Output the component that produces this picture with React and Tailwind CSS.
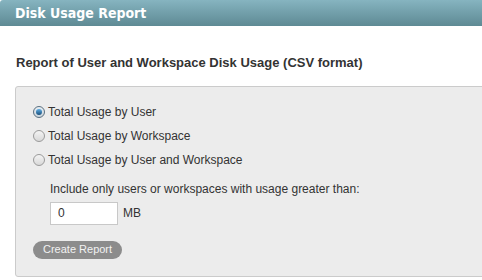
import React, { useState } from "react";

function Radio({ checked, label, onClick }) {
  return (
    <label className="flex items-center h-[24px] cursor-pointer" onClick={onClick}>
      <span
        className={`w-[12px] h-[12px] rounded-full border flex items-center justify-center ${
          checked
            ? "border-[#5a6f80] bg-gradient-to-b from-[#e8eef3] to-[#c9d4dc]"
            : "border-[#9a9a9a] bg-gradient-to-b from-[#f4f4f4] to-[#d8d8d8]"
        }`}
      >
        {checked && (
          <span className="w-[6px] h-[6px] rounded-full bg-gradient-to-b from-[#5fb0e8] to-[#1a4f7a]" />
        )}
      </span>
      <span className="ml-[3px] text-[12px] text-[#333]">{label}</span>
    </label>
  );
}

export default function App() {
  const [mode, setMode] = useState(0);
  const options = [
    "Total Usage by User",
    "Total Usage by Workspace",
    "Total Usage by User and Workspace",
  ];

  return (
    <div className="w-[482px] h-[280px] bg-white overflow-hidden font-['Liberation_Sans',Arial,sans-serif]">
      <div className="h-[26px] bg-gradient-to-b from-[#86b4c0] to-[#5e8a94] rounded-tl-[3px] flex items-center pl-[15px]">
        <h1 className="text-white font-bold text-[14px] font-['DejaVu_Sans_Condensed','DejaVu_Sans',Verdana,sans-serif]">
          Disk Usage Report
        </h1>
      </div>

      <h2 className="mt-[27px] ml-[16px] text-[13px] font-bold text-[#333]">
        Report of User and Workspace Disk Usage (CSV format)
      </h2>

      <div className="mt-[13px] ml-[15px] -mr-[10px] h-[191px] bg-[#ececec] border border-[#cbcbcb] rounded-[3px] pl-[17px] pt-[13px]">
        {options.map((o, i) => (
          <Radio key={o} label={o} checked={mode === i} onClick={() => setMode(i)} />
        ))}

        <div className="ml-[17px] mt-[8px] text-[12px] text-[#333]">
          Include only users or workspaces with usage greater than:
        </div>
        <div className="ml-[17px] mt-[4px] flex items-center">
          <input
            defaultValue="0"
            className="w-[68px] h-[23px] bg-white border border-[#c8c8c8] px-[7px] text-[12px] text-[#333] outline-none"
          />
          <span className="ml-[5px] text-[12px] text-[#333]">MB</span>
        </div>

        <button className="mt-[16px] h-[18px] px-[10px] rounded-full bg-[#8c8c8c] text-[11px] text-[#f2f2f2] leading-none">
          Create Report
        </button>
      </div>
    </div>
  );
}
